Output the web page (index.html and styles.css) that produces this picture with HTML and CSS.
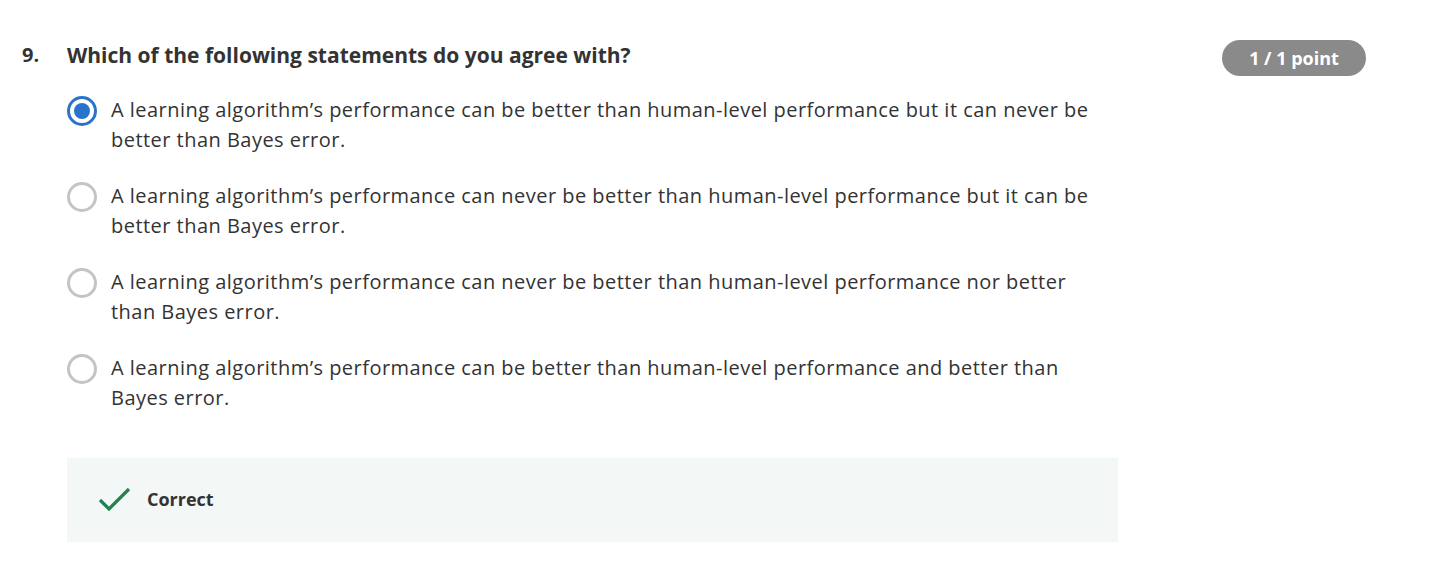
FILE: index.html
```html
<!DOCTYPE html>
<html lang="en">
<head>
<meta charset="utf-8">
<title>Question 9</title>
<link rel="stylesheet" href="styles.css">
</head>
<body>
<div class="question">
  <div class="num">9.</div>
  <div class="main">
    <div class="head">
      <div class="title">Which of the following statements do you agree with?</div>
      <div class="badge">1 / 1 point</div>
    </div>
    <div class="options">
      <div class="option">
        <span class="radio checked"><span class="dot"></span></span>
        <span class="label">A learning algorithm’s performance can be better than human-level performance but it can never be better than Bayes error.</span>
      </div>
      <div class="option">
        <span class="radio"></span>
        <span class="label">A learning algorithm’s performance can never be better than human-level performance but it can be better than Bayes error.</span>
      </div>
      <div class="option">
        <span class="radio"></span>
        <span class="label">A learning algorithm’s performance can never be better than human-level performance nor better than Bayes error.</span>
      </div>
      <div class="option">
        <span class="radio"></span>
        <span class="label">A learning algorithm’s performance can be better than human-level performance and better than Bayes error.</span>
      </div>
    </div>
    <div class="feedback">
      <svg class="check" width="34" height="26" viewBox="0 0 34 26"><path d="M2 14 L11 23 L31 3" fill="none" stroke="#1f8354" stroke-width="3.2"/></svg>
      <span class="fb-text">Correct</span>
    </div>
  </div>
</div>
</body>
</html>
```
FILE: styles.css
```css
body {
  margin: 0;
  background: #fff;
  font-family: "Open Sans", "Liberation Sans", sans-serif;
  color: #333;
}
.question {
  display: flex;
  padding: 40px 72px 0 22px;
}
.num {
  width: 45px;
  flex: none;
  font-size: 20px;
  font-weight: 700;
  line-height: 30px;
  color: #333;
}
.main {
  flex: 1;
}
.head {
  display: flex;
  justify-content: space-between;
  align-items: flex-start;
}
.title {
  font-size: 21px;
  font-weight: 700;
  line-height: 30px;
  color: #333;
}
.badge {
  background: #8a8a8a;
  color: #fff;
  font-size: 18px;
  font-weight: 700;
  height: 36px;
  line-height: 36px;
  width: 144px;
  text-align: center;
  border-radius: 18px;
}
.options {
  display: flex;
  flex-direction: column;
  gap: 26px;
  margin-top: 19px;
  width: 1034px;
}
.option {
  display: flex;
  align-items: flex-start;
}
.radio {
  flex: none;
  width: 30px;
  height: 30px;
  box-sizing: border-box;
  border: 3px solid #c4c4c4;
  border-radius: 50%;
  margin-top: 1px;
  margin-right: 14px;
  display: flex;
  align-items: center;
  justify-content: center;
}
.radio.checked {
  border-color: #2a73cc;
}
.dot {
  width: 16px;
  height: 16px;
  border-radius: 50%;
  background: #2a73cc;
}
.label {
  font-size: 20px;
  letter-spacing: 0.47px;
  line-height: 30px;
  color: #333;
}
.feedback {
  margin-top: 45px;
  width: 1051px;
  height: 84px;
  background: #f3f8f6;
  display: flex;
  align-items: center;
  padding-left: 31px;
  box-sizing: border-box;
}
.check {
  margin-right: 15px;
  margin-top: -2px;
}
.fb-text {
  font-size: 18px;
  font-weight: 700;
  color: #333;
  margin-top: -2px;
}
```
